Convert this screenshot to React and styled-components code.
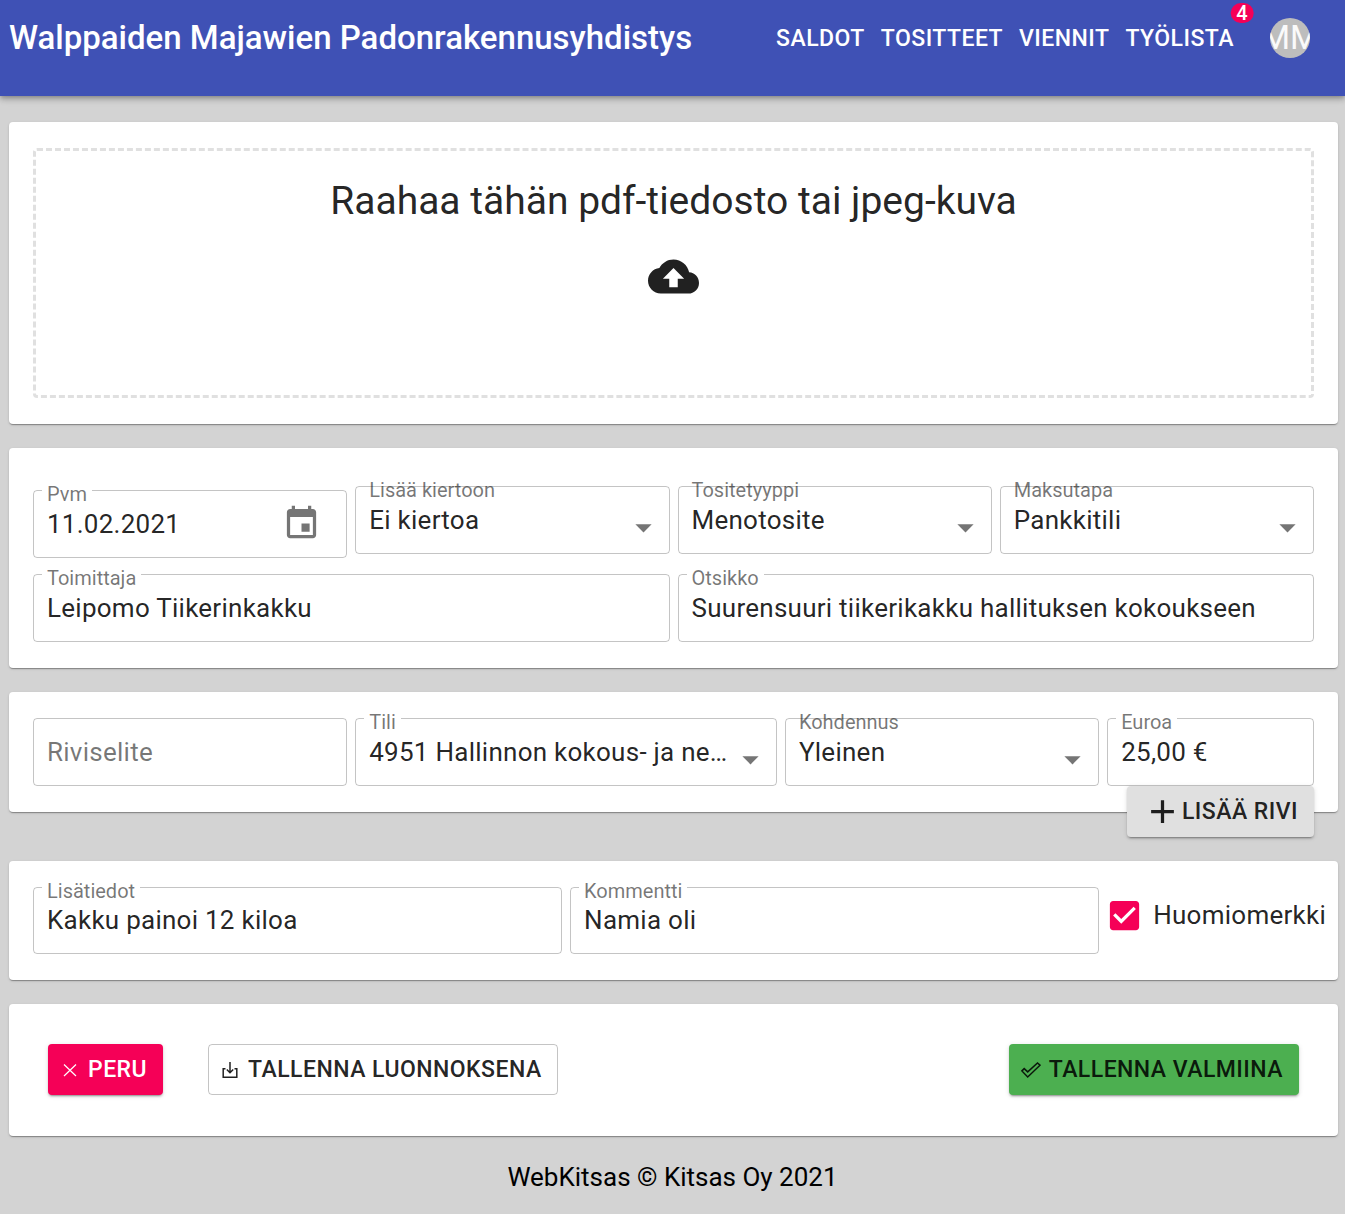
import React, { useState } from "react";
import styled, { createGlobalStyle, css } from "styled-components";

const GlobalStyle = createGlobalStyle`
  *, *::before, *::after { box-sizing: border-box; }
  body {
    margin: 0;
    background: #d3d3d3;
    color: #000;
    font-family: Roboto, "Liberation Sans", sans-serif;
    font-size: 26px;
    line-height: 39px;
  }
  button, input, select, textarea {
    margin: 0;
    font: inherit;
    color: inherit;
  }
`;

const ink = "rgba(0, 0, 0, 0.87)";
const muted = "rgba(0, 0, 0, 0.54)";
const outline = "rgba(0, 0, 0, 0.23)";
const accent = "#f50057";
const bodyTracking = "0.01em";
const buttonTracking = "0.02em";
const raised =
  "0 3px 1px -2px rgba(0,0,0,0.2), 0 2px 2px 0 rgba(0,0,0,0.14), 0 1px 5px 0 rgba(0,0,0,0.12)";

/* Header */

const Header = styled.header`
  display: flex;
  justify-content: space-between;
  align-items: flex-start;
  height: 96px;
  padding: 12px 35px 0 9px;
  background: #3f51b5;
  color: #fff;
  box-shadow: 0 2px 4px -1px rgba(0, 0, 0, 0.2), 0 4px 5px 0 rgba(0, 0, 0, 0.14),
    0 1px 10px 0 rgba(0, 0, 0, 0.12);
`;

const Title = styled.h1`
  margin: 0;
  font-size: 33px;
  font-weight: 500;
  line-height: 52px;
  white-space: nowrap;
`;

const Nav = styled.nav`
  display: flex;
  align-items: center;
`;

const NavLink = styled.a`
  position: relative;
  padding: 7px 8px 5px;
  color: inherit;
  font-size: 23px;
  font-weight: 500;
  line-height: 40px;
  letter-spacing: ${buttonTracking};
  text-decoration: none;
`;

const Badge = styled.span`
  position: absolute;
  top: 1px;
  right: 0;
  min-width: 20px;
  height: 20px;
  padding: 0 6px;
  border-radius: 10px;
  background: ${accent};
  font-size: 20px;
  line-height: 20px;
  letter-spacing: normal;
  text-align: center;
  transform: translate(50%, -50%);
`;

const Avatar = styled.button`
  display: flex;
  align-items: center;
  justify-content: center;
  width: 40px;
  height: 40px;
  margin-left: 28px;
  padding: 0;
  overflow: hidden;
  border: 0;
  border-radius: 50%;
  background: #bdbdbd;
  color: #fafafa;
  font-size: 33px;
  line-height: 40px;
  cursor: pointer;
`;

/* Page and cards */

const Page = styled.main`
  display: flex;
  flex-direction: column;
  gap: 24px;
  padding: 26px 7px 0 9px;
`;

const Card = styled.section`
  padding: 26px 24px;
  border-radius: 4px;
  background: #fff;
  color: ${ink};
  box-shadow: 0 2px 1px -1px rgba(0, 0, 0, 0.2), 0 1px 1px 0 rgba(0, 0, 0, 0.14),
    0 1px 3px 0 rgba(0, 0, 0, 0.12);
`;

const DropZone = styled.label`
  display: flex;
  flex-direction: column;
  align-items: center;
  gap: 24px;
  min-height: 250px;
  padding-top: 24px;
  border: 3px dashed rgba(0, 0, 0, 0.12);
  border-radius: 4px;
  font-size: 39px;
  line-height: 52px;
  cursor: pointer;

  svg {
    width: 51px;
    height: 51px;
  }
`;

const HiddenFile = styled.input`
  position: absolute;
  width: 1px;
  height: 1px;
  opacity: 0;
`;

const FormGrid = styled.div`
  display: grid;
  grid-template-columns: repeat(12, minmax(0, 1fr));
  column-gap: 8px;
  row-gap: 16px;
  align-items: start;
`;

/* Form fields */

const FieldBox = styled.div`
  position: relative;
  display: flex;
  align-items: center;
  grid-column: span ${(p) => p.$span};
  margin-top: ${(p) => p.$drop || 0}px;
  border: 1px solid ${outline};
  border-radius: 4px;
`;

const FieldLabel = styled.label`
  position: absolute;
  top: -7px;
  left: 8px;
  padding: 0 5px;
  color: ${muted};
  background: ${(p) => (p.$notched ? "#fff" : "transparent")};
  font-size: 20px;
  line-height: 20px;
  white-space: nowrap;
`;

const control = css`
  display: block;
  flex: 1;
  width: 100%;
  min-width: 0;
  border: 0;
  outline: 0;
  background: transparent;
  line-height: 30px;
  letter-spacing: ${bodyTracking};
`;

const TextInput = styled.input`
  ${control}
  height: 66px;
  padding: 0 13px;

  &::placeholder {
    color: ${muted};
    opacity: 1;
  }
`;

const TextArea = styled.textarea`
  ${control}
  height: 65px;
  padding: 17px 13px 18px;
  overflow: hidden;
  resize: none;
`;

const Select = styled.select`
  ${control}
  height: 66px;
  padding: 0 46px 0 13px;
  appearance: none;
  text-overflow: ellipsis;
`;

const SelectArrow = styled.svg`
  position: absolute;
  top: calc(50% - 12px);
  right: 6px;
  width: 39px;
  height: 39px;
  fill: ${muted};
  pointer-events: none;
`;

const DateButton = styled.button`
  display: flex;
  flex: none;
  margin-right: 25px;
  padding: 0 0 2px;
  border: 0;
  background: none;
  cursor: pointer;

  svg {
    width: 39px;
    height: 39px;
    fill: ${muted};
  }
`;

const CheckLabel = styled.label`
  display: flex;
  align-items: center;
  grid-column: span 2;
  gap: 9px;
  height: 57px;
  margin-left: -2px;
  letter-spacing: ${bodyTracking};
  white-space: nowrap;
  cursor: pointer;
`;

const CheckMark = styled.span`
  display: grid;
  flex: none;
  width: 39px;
  height: 39px;

  > * {
    grid-area: 1 / 1;
    width: 39px;
    height: 39px;
    margin: 0;
  }

  input {
    opacity: 0;
  }

  svg {
    fill: ${accent};
    pointer-events: none;
  }
`;

/* Buttons */

const looks = {
  grey: css`
    background-color: #e0e0e0;
    box-shadow: ${raised};
  `,
  red: css`
    background-color: ${accent};
    color: #fff;
    box-shadow: ${raised};
  `,
  green: css`
    background-color: #4caf50;
    box-shadow: ${raised};
  `,
  outlined: css`
    border-color: ${outline};
    background-color: transparent;
  `,
};

const Button = styled.button`
  display: inline-flex;
  align-items: center;
  gap: 8px;
  height: 51px;
  padding: 0 15px 0 11px;
  border: 1px solid transparent;
  border-radius: 4px;
  color: ${ink};
  font-size: 23px;
  font-weight: 500;
  line-height: 40px;
  letter-spacing: ${buttonTracking};
  white-space: nowrap;
  cursor: pointer;
  ${(p) => looks[p.$look]}

  svg {
    flex: none;
    width: 20px;
    height: 20px;
    fill: none;
    stroke: currentColor;
  }
`;

const AddButton = styled(Button)`
  gap: 0;
  padding: 0 15px;

  svg {
    width: 39px;
    height: 39px;
    fill: currentColor;
    stroke: none;
  }
`;

const RowGroup = styled.div`
  display: flex;
  flex-direction: column;
`;

const AddRow = styled.div`
  display: flex;
  justify-content: flex-end;
  margin-top: -26px;
  padding-right: 24px;
`;

const ActionBar = styled.div`
  display: flex;
  align-items: center;
  gap: 45px;
  padding: 14px 15px 15px;

  > :last-child {
    margin-left: auto;
  }
`;

const Footer = styled.footer`
  padding: 22px 0 17px;
  text-align: center;
`;

function TextField({ id, label, value, span, drop, children }) {
  return (
    <FieldBox $span={span} $drop={drop}>
      <FieldLabel htmlFor={id} $notched>{label}</FieldLabel>
      <TextInput id={id} type="text" defaultValue={value} />
      {children}
    </FieldBox>
  );
}

function AreaField({ id, label, value, span }) {
  return (
    <FieldBox $span={span}>
      <FieldLabel htmlFor={id} $notched>{label}</FieldLabel>
      <TextArea id={id} rows={1} defaultValue={value} />
    </FieldBox>
  );
}

function SelectField({ id, label, value, span, drop, notched }) {
  return (
    <FieldBox $span={span} $drop={drop}>
      <FieldLabel htmlFor={id} $notched={notched}>{label}</FieldLabel>
      <Select id={id} defaultValue={value}>
        <option value={value}>{value}</option>
      </Select>
      <SelectArrow viewBox="0 0 24 24" aria-hidden="true">
        <path d="M7 10l5 5 5-5z" />
      </SelectArrow>
    </FieldBox>
  );
}

export default function App() {
  const [flagged, setFlagged] = useState(true);

  return (
    <>
      <GlobalStyle />
      <Header>
        <Title>Walppaiden Majawien Padonrakennusyhdistys</Title>
        <Nav>
          <NavLink href="#saldot">SALDOT</NavLink>
          <NavLink href="#tositteet">TOSITTEET</NavLink>
          <NavLink href="#viennit">VIENNIT</NavLink>
          <NavLink href="#tyolista">
            TYÖLISTA
            <Badge>4</Badge>
          </NavLink>
          <Avatar type="button">MM</Avatar>
        </Nav>
      </Header>

      <Page>
        <Card>
          <DropZone>
            <HiddenFile type="file" accept="application/pdf,image/jpeg" />
            Raahaa tähän pdf-tiedosto tai jpeg-kuva
            <svg viewBox="0 0 24 24" fill={ink} aria-hidden="true">
              <path d="M19.35 10.04C18.67 6.59 15.64 4 12 4 9.11 4 6.6 5.64 5.35 8.04 2.34 8.36 0 10.91 0 14c0 3.31 2.69 6 6 6h13c2.76 0 5-2.24 5-5 0-2.64-2.05-4.78-4.65-4.96zM14 13v4h-4v-4H7l5-5 5 5h-3z" />
            </svg>
          </DropZone>
        </Card>

        <Card>
          <FormGrid>
            <TextField id="pvm" label="Pvm" value="11.02.2021" span={3} drop={16}>
              <DateButton type="button" aria-label="Pvm">
                <svg viewBox="0 0 24 24" aria-hidden="true">
                  <path d="M17 12h-5v5h5v-5zM16 1v2H8V1H6v2H5c-1.11 0-1.99.9-1.99 2L3 19c0 1.1.89 2 2 2h14c1.1 0 2-.9 2-2V5c0-1.1-.9-2-2-2h-1V1h-2zm3 18H5V8h14v11z" />
                </svg>
              </DateButton>
            </TextField>
            <SelectField id="kierto" label="Lisää kiertoon" value="Ei kiertoa" span={3} drop={12} />
            <SelectField id="tyyppi" label="Tositetyyppi" value="Menotosite" span={3} drop={12} />
            <SelectField id="maksutapa" label="Maksutapa" value="Pankkitili" span={3} drop={12} />
            <TextField id="toimittaja" label="Toimittaja" value="Leipomo Tiikerinkakku" span={6} />
            <TextField
              id="otsikko"
              label="Otsikko"
              value="Suurensuuri tiikerikakku hallituksen kokoukseen"
              span={6}
            />
          </FormGrid>
        </Card>

        <RowGroup>
          <Card>
            <FormGrid>
              <FieldBox $span={3}>
                <TextInput type="text" aria-label="Riviselite" placeholder="Riviselite" />
              </FieldBox>
              <SelectField id="tili" label="Tili" value="4951 Hallinnon kokous- ja ne…" span={4} notched />
              <SelectField id="kohdennus" label="Kohdennus" value="Yleinen" span={3} />
              <TextField id="euroa" label="Euroa" value="25,00 €" span={2} />
            </FormGrid>
          </Card>
          <AddRow>
            <AddButton type="button" $look="grey">
              <svg viewBox="0 0 24 24" aria-hidden="true">
                <path d="M19 13h-6v6h-2v-6H5v-2h6V5h2v6h6v2z" />
              </svg>
              LISÄÄ RIVI
            </AddButton>
          </AddRow>
        </RowGroup>

        <Card>
          <FormGrid>
            <AreaField id="lisatiedot" label="Lisätiedot" value="Kakku painoi 12 kiloa" span={5} />
            <AreaField id="kommentti" label="Kommentti" value="Namia oli" span={5} />
            <CheckLabel>
              <CheckMark>
                <input
                  type="checkbox"
                  checked={flagged}
                  onChange={(e) => setFlagged(e.target.checked)}
                />
                <svg viewBox="0 0 24 24" aria-hidden="true">
                  {flagged ? (
                    <path d="M19 3H5c-1.11 0-2 .9-2 2v14c0 1.1.89 2 2 2h14c1.11 0 2-.9 2-2V5c0-1.1-.89-2-2-2zm-9 14l-5-5 1.41-1.41L10 14.17l7.59-7.59L19 8l-9 9z" />
                  ) : (
                    <path d="M19 5v14H5V5h14m0-2H5c-1.1 0-2 .9-2 2v14c0 1.1.9 2 2 2h14c1.1 0 2-.9 2-2V5c0-1.1-.9-2-2-2z" />
                  )}
                </svg>
              </CheckMark>
              Huomiomerkki
            </CheckLabel>
          </FormGrid>
        </Card>

        <Card>
          <ActionBar>
            <Button type="button" $look="red">
              <svg viewBox="0 0 20 20" strokeWidth="1.2" aria-hidden="true">
                <path d="M4 4.5l12 11.5M16 4.5L4 16" />
              </svg>
              PERU
            </Button>
            <Button type="button" $look="outlined">
              <svg viewBox="0 0 20 20" strokeWidth="1.5" aria-hidden="true">
                <path d="M5.5 8.7H3.2v8.6h13.6V8.7h-2.3M10 2v10.5M6.8 9.5l3.2 3.2 3.2-3.2" />
              </svg>
              TALLENNA LUONNOKSENA
            </Button>
            <Button type="button" $look="green">
              <svg viewBox="0 0 20 20" strokeWidth="1.5" aria-hidden="true">
                <path d="M0.9 10.9l2.3-2.3 3.5 3.3 9.8-8.9 2.5 2.2L6.7 17z" />
              </svg>
              TALLENNA VALMIINA
            </Button>
          </ActionBar>
        </Card>
      </Page>
      <Footer>WebKitsas © Kitsas Oy 2021</Footer>
    </>
  );
}
